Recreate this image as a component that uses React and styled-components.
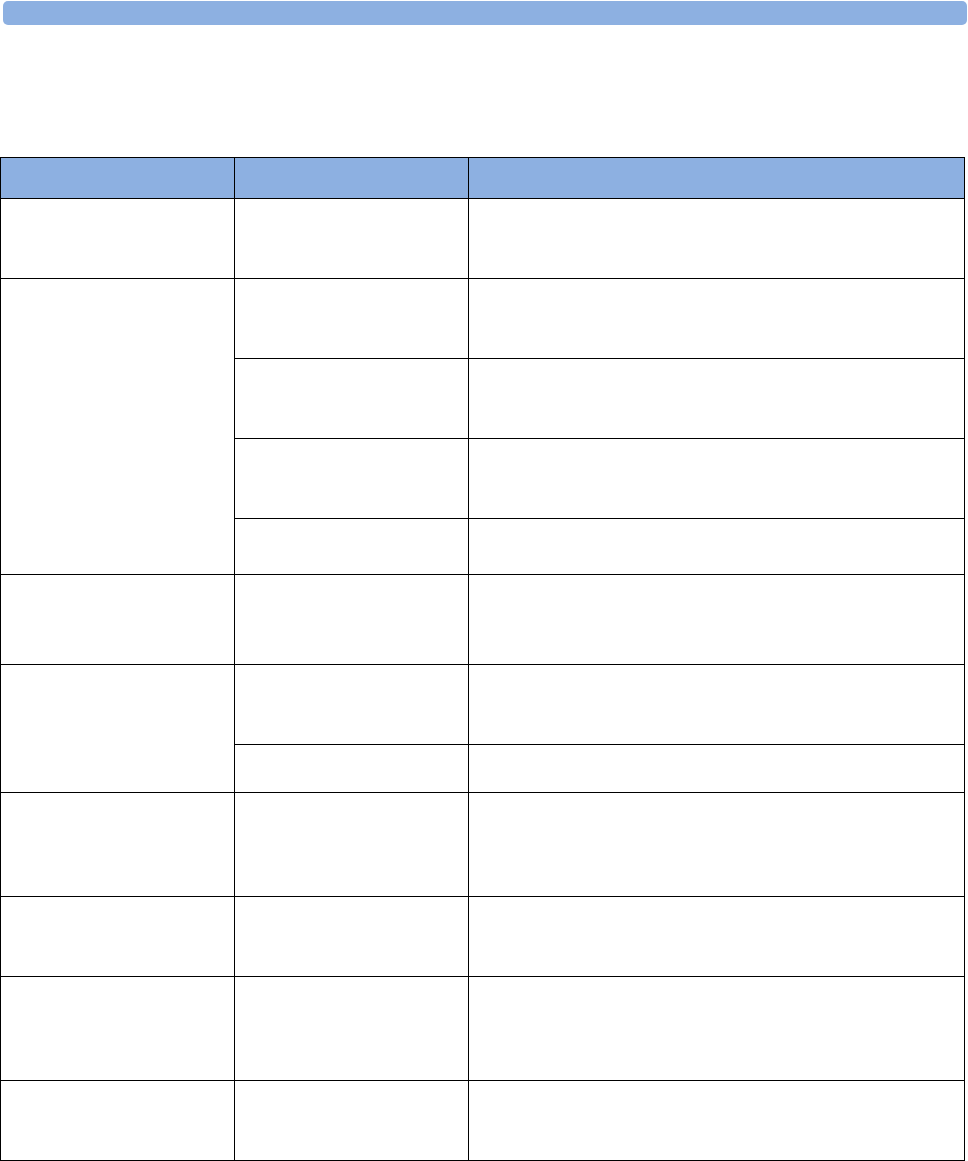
import styled, { createGlobalStyle } from "styled-components"

const GlobalStyle = createGlobalStyle`
    body {
        margin: 0;
        background: #ffffff;
        font-family: "Liberation Sans", Arial, sans-serif;
    }
`

const Page = styled.div`
    width: 968px;
    min-height: 1161px;
    background: #ffffff;
`

const TopBar = styled.div`
    margin: 1px 0 0 3px;
    width: 964px;
    height: 24px;
    border-radius: 5px;
    background-color: #8db0e1;
`

const Table = styled.div`
    margin-top: 132px;
    width: 965px;
    display: grid;
    grid-template-columns: 234px 234px 496px;
    grid-template-rows: 41px 80px 80px 80px 80px 56px 90px 80px 48px 104px 80px 104px 80px;
    border-top: 1px solid #000;
    border-left: 1px solid #000;
    box-sizing: border-box;
`

const Cell = styled.div`
    border-right: 1px solid #000;
    border-bottom: 1px solid #000;
    background-color: ${(p) => (p.$head ? "#8db0e1" : "#ffffff")};
    grid-row: ${(p) => (p.$span ? `span ${p.$span}` : "auto")};
    padding: 6px 8px;
    font-size: 14px;
    color: #000;
`

// first column: rows it spans; the other two columns have one cell per body row
const groups = [1, 4, 1, 2, 1, 1, 1, 1]

const App = () => {
  const cells = []
  groups.forEach((span, g) => {
    for (let i = 0; i < span; i++) {
      if (i === 0) cells.push(<Cell key={`a${g}`} $span={span} />)
      cells.push(<Cell key={`b${g}-${i}`} />)
      cells.push(<Cell key={`c${g}-${i}`} />)
    }
  })

  return (
    <Page>
      <GlobalStyle />
      <TopBar />
      <Table>
        <Cell $head />
        <Cell $head />
        <Cell $head />
        {cells}
      </Table>
    </Page>
  )
}

export default App
